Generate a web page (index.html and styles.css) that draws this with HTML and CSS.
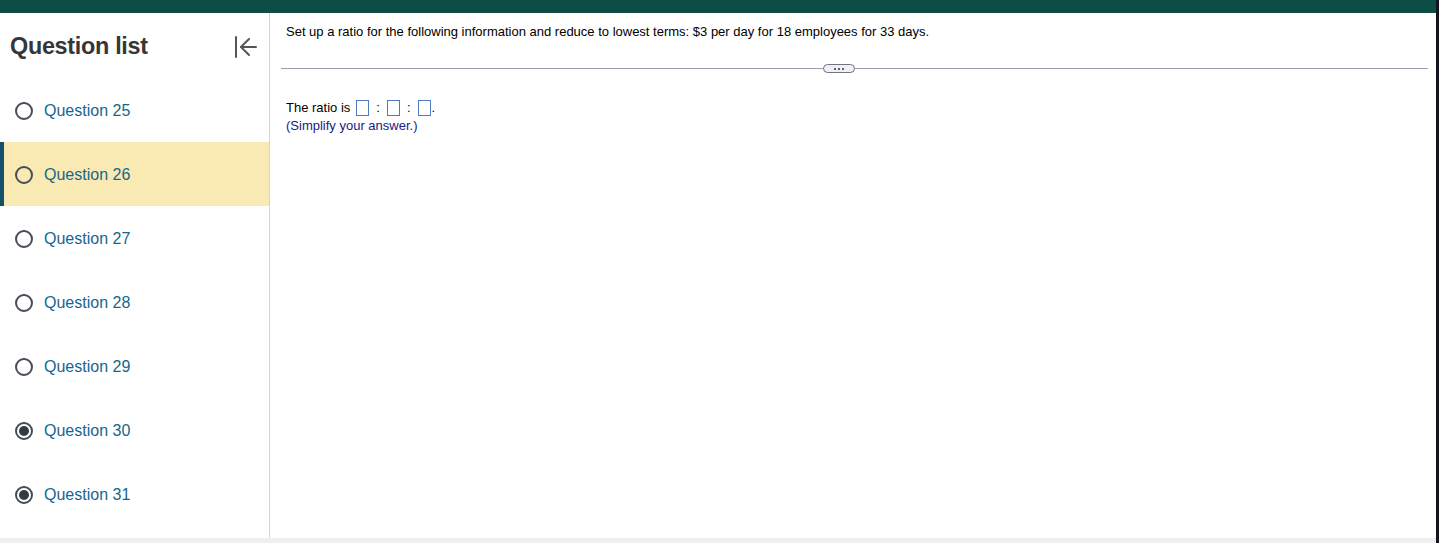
FILE: index.html
```html
<!DOCTYPE html>
<html>
<head>
<meta charset="utf-8">
<link rel="stylesheet" href="styles.css">
</head>
<body>
<div class="page">
  <div class="topbar"></div>
  <div class="body">
    <aside class="sidebar">
      <div class="side-head">
        <h2 class="side-title">Question list</h2>
        <svg class="collapse" width="24" height="24" viewBox="0 0 24 24" fill="none" stroke="#555" stroke-width="2" stroke-linecap="round" stroke-linejoin="round">
          <line x1="3" y1="2" x2="3" y2="22"/>
          <line x1="8" y1="12" x2="23" y2="12"/>
          <polyline points="16,4 8,12 16,20"/>
        </svg>
      </div>
      <ul class="qlist">
        <li class="q"><span class="radio"></span><span class="qname">Question 25</span></li>
        <li class="q active"><span class="radio"></span><span class="qname">Question 26</span></li>
        <li class="q"><span class="radio"></span><span class="qname">Question 27</span></li>
        <li class="q"><span class="radio"></span><span class="qname">Question 28</span></li>
        <li class="q"><span class="radio"></span><span class="qname">Question 29</span></li>
        <li class="q"><span class="radio done"></span><span class="qname">Question 30</span></li>
        <li class="q"><span class="radio done"></span><span class="qname">Question 31</span></li>
      </ul>
    </aside>
    <main class="main">
      <p class="prompt">Set up a ratio for the following information and reduce to lowest terms: $3 per day for 18 employees for 33 days.</p>
      <div class="divider"><span class="pill"><span class="dot"></span><span class="dot"></span><span class="dot"></span></span></div>
      <div class="answer">
        <div class="line">The ratio is <span class="box"></span><span class="colon">:</span><span class="box"></span><span class="colon">:</span><span class="box"></span>.</div>
        <div class="hint">(Simplify your answer.)</div>
      </div>
    </main>
    <div class="edge"></div>
  </div>
  <div class="bottom"></div>
</div>
</body>
</html>
```
FILE: styles.css
```css
* { box-sizing: border-box; }
html, body { margin: 0; padding: 0; background: #fff; }
body { font-family: "Liberation Sans", Arial, sans-serif; overflow: hidden; }
.page { width: 1439px; height: 543px; display: flex; flex-direction: column; position: relative; }
.topbar { height: 13px; background: #0d4d45; flex: none; margin-right: 3px; }
.body { flex: 1; display: flex; min-height: 0; }
.sidebar { width: 270px; flex: none; border-right: 1px solid #d3d3dd; display: flex; flex-direction: column; }
.side-head { height: 65px; display: flex; align-items: center; justify-content: space-between; padding: 2px 10px 0 10px; }
.side-title { margin: 0; font-size: 23.4px; font-weight: bold; color: #363636; letter-spacing: -0.3px; font-family: "Liberation Sans", Arial, sans-serif; }
.collapse { width: 24px; height: 24px; margin-right: 2px; }
.qlist { list-style: none; margin: 0; padding: 0; }
.q { height: 64px; display: flex; align-items: center; padding-left: 15px; padding-top: 1px; }
.q.active { background: #f9e9b2; border-left: 4px solid #13506b; padding-left: 11px; }
.radio { width: 18px; height: 18px; border: 2px solid #464c54; border-radius: 50%; margin-right: 11px; flex: none; display: flex; align-items: center; justify-content: center; }
.radio.done::after { content: ""; width: 10px; height: 10px; border-radius: 50%; background: #323b46; }
.qname { font-size: 16px; color: #17668a; }
.main { flex: 1; padding: 0 11px 0 11px; min-width: 0; }
.prompt { margin: 0; padding: 11px 0 0 5px; font-size: 13px; line-height: 15px; color: #000; }
.divider { margin-top: 29px; height: 1px; background: #9b9bab; position: relative; }
.pill { position: absolute; top: -4px; left: 542px; width: 32px; height: 9px; border: 1px solid #6f7380; border-radius: 5px; background: #eef0f5; display: flex; align-items: center; justify-content: center; gap: 2px; }
.dot { width: 2px; height: 2px; background: #333; border-radius: 50%; }
.answer { padding: 29px 0 0 5px; font-size: 13px; color: #000; }
.line { display: flex; align-items: center; height: 19px; }
.box { display: inline-block; width: 13px; height: 16px; border: 1px solid #5079c6; margin: 0 1px; }
.box:first-child { margin-left: 6px; }
.colon { margin: 0 6px; }
.hint { color: #1a1a80; line-height: 15px; margin-top: 1px; }
.edge { width: 3px; background: #14141c; flex: none; position: absolute; top: 0; right: 0; height: 543px; }
.bottom { height: 5px; background: #efeff1; flex: none; margin-right: 3px; }
```
